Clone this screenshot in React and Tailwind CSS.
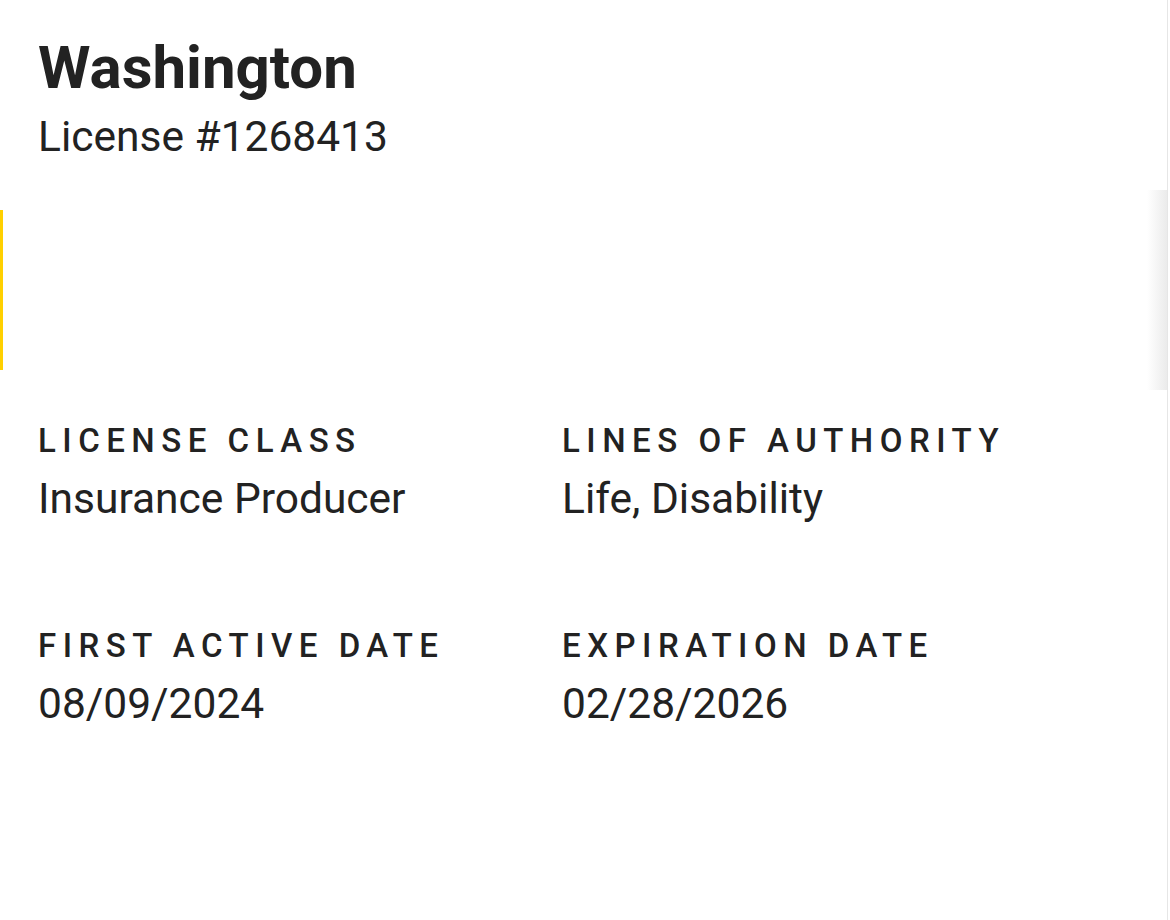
export default function App() {
  const font = { fontFamily: 'Roboto, "Noto Sans", sans-serif' };
  return (
    <div className="relative w-[1170px] h-[920px] bg-white overflow-hidden text-[#222222]" style={font}>
      <div className="absolute left-0 top-[210px] w-[3px] h-[160px] bg-[#FFD000]" />
      <div className="absolute right-[2px] top-0 w-[1px] h-full bg-[#e6e6e6]" />
      <div className="absolute right-[3px] top-[190px] w-[20px] h-[200px] bg-gradient-to-r from-white to-[#ebebeb]" />
      <div className="pl-[38px] pt-[38px]">
        <h1 className="text-[60px] leading-none font-bold">Washington</h1>
        <p className="mt-[18px] text-[42.5px] leading-none">License #1268413</p>
        <div className="mt-[265px] grid grid-cols-[524px_1fr] gap-y-[109px]">
          <Field label="LICENSE CLASS" value="Insurance Producer" />
          <Field label="LINES OF AUTHORITY" value="Life, Disability" />
          <Field label="FIRST ACTIVE DATE" value="08/09/2024" />
          <Field label="EXPIRATION DATE" value="02/28/2026" />
        </div>
      </div>
    </div>
  );
}

function Field({ label, value }) {
  return (
    <div className="flex flex-col">
      <span className="text-[33px] leading-none font-medium tracking-[6.5px]">{label}</span>
      <span className="mt-[21px] text-[42.5px] leading-none">{value}</span>
    </div>
  );
}
